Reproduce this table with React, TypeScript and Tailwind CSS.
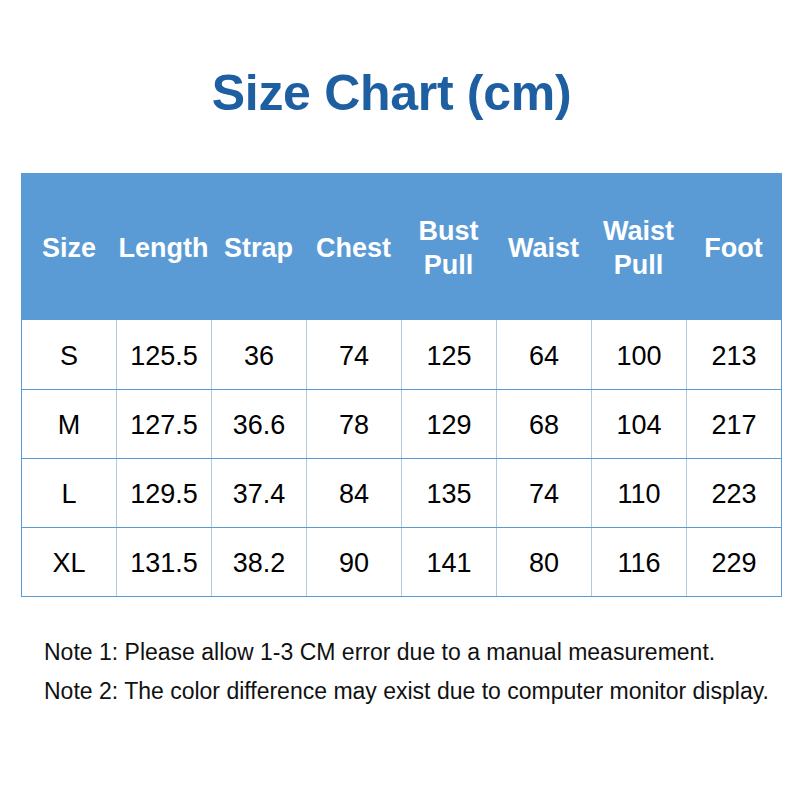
import React from "react";

const headers: string[][] = [
  ["Size"],
  ["Length"],
  ["Strap"],
  ["Chest"],
  ["Bust", "Pull"],
  ["Waist"],
  ["Waist", "Pull"],
  ["Foot"],
];

const rows: string[][] = [
  ["S", "125.5", "36", "74", "125", "64", "100", "213"],
  ["M", "127.5", "36.6", "78", "129", "68", "104", "217"],
  ["L", "129.5", "37.4", "84", "135", "74", "110", "223"],
  ["XL", "131.5", "38.2", "90", "141", "80", "116", "229"],
];

export default function App() {
  return (
    <div
      className="w-[800px] h-[800px] bg-white flex flex-col"
      style={{ fontFamily: '"Liberation Sans", Arial, sans-serif' }}
    >
      <h1 className="mt-[68px] pr-[17px] text-center text-[50px] leading-[50px] font-bold text-[#1e5fa2] tracking-[-0.3px]">
        Size Chart (cm)
      </h1>
      <div className="mt-[55px] ml-[21px] w-[761px] border border-[#5b9bd5]">
        <div className="grid grid-cols-[94px_repeat(7,95px)] h-[146px] bg-[#5b9bd5]">
          {headers.map((h, i) => (
            <div
              key={i}
              className="flex flex-col items-center justify-center pt-[2px] text-white font-bold text-[27px] leading-[34px]"
            >
              {h.map((l, j) => (
                <span key={j}>{l}</span>
              ))}
            </div>
          ))}
        </div>
        {rows.map((r, ri) => (
          <div
            key={ri}
            className={`grid grid-cols-[94px_repeat(7,95px)] h-[69px] ${ri > 0 ? "border-t border-[#5b9bd5]" : ""}`}
          >
            {r.map((c, ci) => (
              <div
                key={ci}
                className={`flex items-center justify-center pt-[3px] text-[27px] text-black ${ci > 0 ? "border-l border-[#b4c7e0]" : ""}`}
              >
                {c}
              </div>
            ))}
          </div>
        ))}
      </div>
      <div className="mt-[36px] ml-[44px] text-[23px] leading-[39px] text-[#111]">
        <p>Note 1: Please allow 1-3 CM error due to a manual measurement.</p>
        <p>Note 2: The color difference may exist due to computer monitor display.</p>
      </div>
    </div>
  );
}
